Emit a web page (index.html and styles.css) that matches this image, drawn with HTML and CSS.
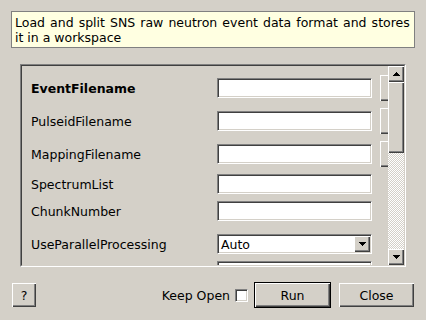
FILE: index.html
```html
<!DOCTYPE html>
<html lang="en">
<head>
    <meta charset="UTF-8">
    <meta name="viewport" content="width=device-width, initial-scale=1.0">
    <title>LoadEventPreNexus</title>
    <link rel="stylesheet" href="styles.css">
</head>
<body>
    <div class="dialog">
        <div class="description"><span class="desc-first">Load and split SNS raw neutron event data format and stores</span><br>it in a workspace</div>

        <div class="frame">
            <div class="frame-inner">
                <div class="viewport">
                    <div class="prop-row tall">
                        <label class="prop-label required" for="event">EventFilename</label>
                        <input class="field" type="text" id="event">
                        <button class="btn browse" title="Browse"></button>
                    </div>
                    <div class="prop-row tall">
                        <label class="prop-label" for="pulseid">PulseidFilename</label>
                        <input class="field" type="text" id="pulseid">
                        <button class="btn browse" title="Browse"></button>
                    </div>
                    <div class="prop-row tall">
                        <label class="prop-label" for="mapping">MappingFilename</label>
                        <input class="field" type="text" id="mapping">
                        <button class="btn browse" title="Browse"></button>
                    </div>
                    <div class="prop-row">
                        <label class="prop-label" for="spectrum">SpectrumList</label>
                        <input class="field" type="text" id="spectrum">
                    </div>
                    <div class="prop-row">
                        <label class="prop-label" for="chunk">ChunkNumber</label>
                        <input class="field" type="text" id="chunk">
                    </div>
                    <div class="prop-row combo">
                        <span class="prop-label">UseParallelProcessing</span>
                        <div class="combo-box">
                            <span class="combo-text">Auto</span>
                            <span class="btn combo-arrow">
                                <svg width="7" height="4" viewBox="0 0 7 4" shape-rendering="crispEdges">
                                    <rect x="0" y="0" width="7" height="1"/>
                                    <rect x="1" y="1" width="5" height="1"/>
                                    <rect x="2" y="2" width="3" height="1"/>
                                    <rect x="3" y="3" width="1" height="1"/>
                                </svg>
                            </span>
                        </div>
                    </div>
                    <div class="prop-row">
                        <span class="prop-label"></span>
                        <input class="field" type="text" id="output">
                    </div>
                </div>

                <div class="scrollbar">
                    <div class="btn sb-btn">
                        <svg width="7" height="4" viewBox="0 0 7 4" shape-rendering="crispEdges">
                            <rect x="3" y="0" width="1" height="1"/>
                            <rect x="2" y="1" width="3" height="1"/>
                            <rect x="1" y="2" width="5" height="1"/>
                            <rect x="0" y="3" width="7" height="1"/>
                        </svg>
                    </div>
                    <div class="btn sb-handle"></div>
                    <div class="sb-trough"></div>
                    <div class="btn sb-btn">
                        <svg width="7" height="4" viewBox="0 0 7 4" shape-rendering="crispEdges">
                            <rect x="0" y="0" width="7" height="1"/>
                            <rect x="1" y="1" width="5" height="1"/>
                            <rect x="2" y="2" width="3" height="1"/>
                            <rect x="3" y="3" width="1" height="1"/>
                        </svg>
                    </div>
                </div>
            </div>
        </div>

        <div class="button-bar">
            <button class="btn help">?</button>
            <div class="spacer"></div>
            <label class="keep-open">Keep Open <span class="checkbox"></span></label>
            <div class="default-frame">
                <button class="btn action">Run</button>
            </div>
            <button class="btn action close">Close</button>
        </div>
    </div>
</body>
</html>
```

FILE: styles.css
```css
body {
    margin: 0;
    background-color: #d4d0c8;
    font-family: "DejaVu Sans", sans-serif;
    font-size: 12.5px;
    color: #000;
}
.dialog {
    padding: 11px;
}
.description {
    background-color: #ffffe1;
    border: 1px solid #808080;
    padding: 3px 0 2px 3px;
    line-height: 15px;
    height: 30px;
    white-space: nowrap;
    overflow: hidden;
}
.desc-first {
    word-spacing: 1.1px;
}

/* sunken scroll area */
.frame {
    margin: 16px 9px 0;
    border: 1px solid;
    border-color: #808080 #fff #fff #808080;
}
.frame-inner {
    display: flex;
    height: 199px;
    border: 1px solid;
    border-color: #404040 #d4d0c8 #d4d0c8 #404040;
}
.viewport {
    flex: 1;
    overflow: hidden;
    display: flex;
    flex-direction: column;
    gap: 7px;
    padding-top: 9px;
}
.prop-row {
    display: flex;
    align-items: center;
    flex: none;
    height: 20px;
    padding-left: 9px;
}
.prop-row.tall {
    height: 26px;
}
.prop-row.combo {
    margin-top: 6px;
}
.prop-label {
    flex: none;
    width: 186px;
    padding-top: 1px;
}
.required {
    font-weight: bold;
}
.field {
    flex: none;
    box-sizing: border-box;
    width: 155px;
    height: 20px;
    margin: 0;
    padding: 0 2px;
    font: inherit;
    background-color: #fff;
    border: 1px solid;
    border-color: #808080 #fff #fff #808080;
    box-shadow: inset 1px 1px #404040, inset -1px -1px #d4d0c8;
    outline: none;
}

/* raised look shared by all buttons */
.btn {
    background-color: #d4d0c8;
    border: none;
    margin: 0;
    padding: 0;
    font: inherit;
    color: #000;
    box-shadow: inset 1px 1px #fff, inset -1px -1px #404040, inset -2px -2px #808080;
}
.browse {
    flex: none;
    width: 75px;
    height: 26px;
    margin-left: 8px;
}
.combo-box {
    flex: none;
    display: flex;
    align-items: center;
    box-sizing: border-box;
    width: 155px;
    height: 20px;
    padding: 1px;
    background-color: #fff;
    border: 1px solid;
    border-color: #808080 #fff #fff #808080;
    box-shadow: inset 1px 1px #404040, inset -1px -1px #d4d0c8;
}
.combo-text {
    flex: 1;
    padding-left: 2px;
}
.combo-arrow {
    display: flex;
    align-items: center;
    justify-content: center;
    width: 16px;
    height: 16px;
}

/* vertical scrollbar */
.scrollbar {
    display: flex;
    flex-direction: column;
    width: 16px;
}
.sb-btn {
    display: flex;
    align-items: center;
    justify-content: center;
    flex: none;
    height: 16px;
}
.sb-handle {
    flex: none;
    height: 71px;
}
.sb-trough {
    flex: 1;
    background: repeating-conic-gradient(#fff 0 25%, #d4d0c8 0 50%) 0 0 / 2px 2px;
}

/* bottom buttons */
.button-bar {
    display: flex;
    align-items: center;
    height: 26px;
    margin-top: 15px;
    padding: 0 1px;
}
.help {
    width: 24px;
    height: 24px;
}
.spacer {
    flex: 1;
}
.keep-open {
    display: flex;
    align-items: center;
    gap: 5px;
    margin-right: 6px;
}
.checkbox {
    display: block;
    box-sizing: border-box;
    width: 13px;
    height: 13px;
    background-color: #fff;
    border: 1px solid;
    border-color: #808080 #fff #fff #808080;
    box-shadow: inset 1px 1px #404040, inset -1px -1px #d4d0c8;
}
.default-frame {
    border: 1px solid #000;
    display: flex;
}
.action {
    width: 75px;
    height: 24px;
}
.close {
    margin-left: 8px;
}
```
